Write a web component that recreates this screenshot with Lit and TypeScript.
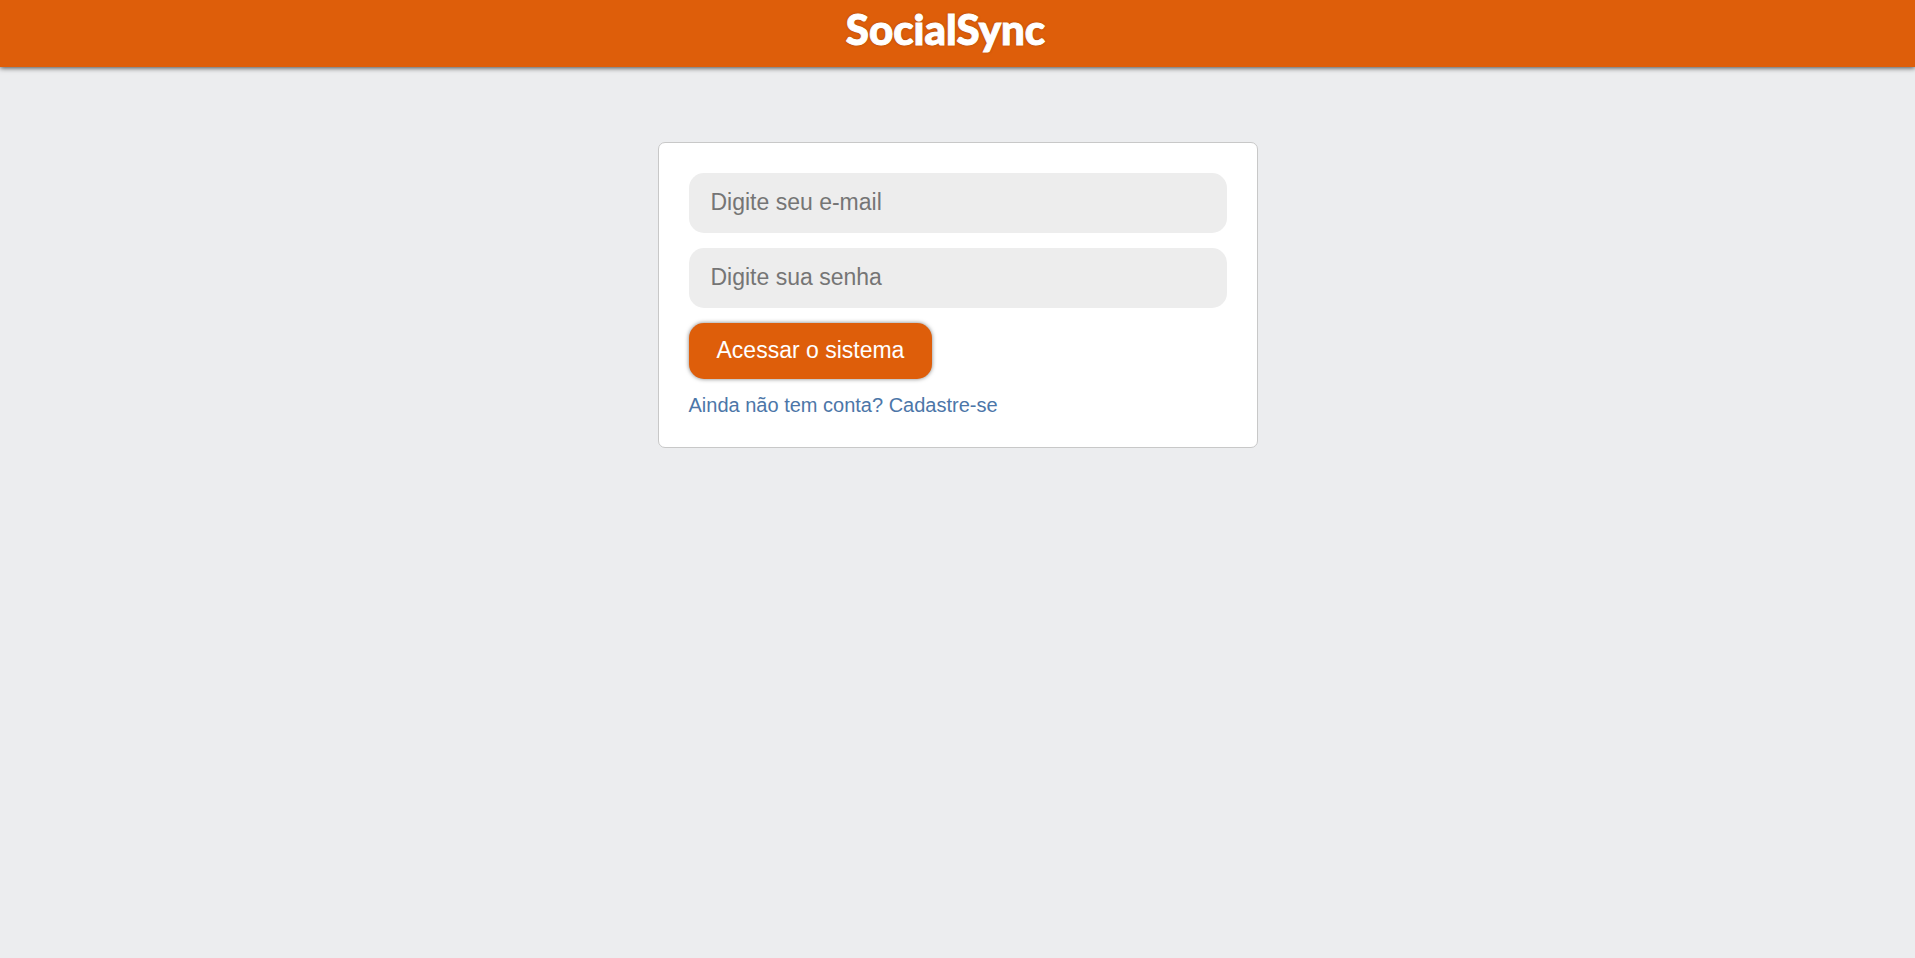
import { LitElement, html, css } from "lit";
import { customElement } from "lit/decorators.js";

@customElement("app-root")
export class AppRoot extends LitElement {
  static styles = css`
    :host {
      display: block;
      min-height: 100vh;
      background: #ecedef;
      font-family: Arial, "Liberation Sans", sans-serif;
    }
    * {
      box-sizing: border-box;
    }
    .header {
      display: flex;
      justify-content: center;
      height: 67px;
      padding-right: 24px;
      background: #de5e0a;
      box-shadow: 0 1px 5px rgba(0, 0, 0, 0.7);
    }
    .logo {
      color: #fff;
      font-family: Lato, "Open Sans", sans-serif;
      font-size: 42px;
      font-weight: 900;
      line-height: 58px;
      text-decoration: none;
      text-shadow: 0 0 3px rgba(0, 0, 0, 0.35);
      -webkit-text-stroke: 1px #fff;
    }
    .main {
      padding: 75px 20px;
    }
    .card {
      display: flex;
      flex-direction: column;
      align-items: flex-start;
      gap: 15px;
      max-width: 600px;
      margin: 0 auto;
      padding: 30px;
      background: #fff;
      border: 1px solid #c8c8c8;
      border-radius: 7px;
    }
    .field,
    .submit {
      border: 0;
      border-radius: 15px;
      font: 23px/26px Arial, "Liberation Sans", sans-serif;
    }
    .field {
      width: 100%;
      height: 60px;
      padding: 0 22px 2px;
      background: #ededed;
      color: #333;
    }
    .field::placeholder {
      color: #757575;
    }
    .submit {
      height: 56px;
      padding: 0 28px 2px;
      background: #de5e0a;
      box-shadow: 0 0 4px rgba(0, 0, 0, 0.5);
      color: #fff;
      cursor: pointer;
    }
    .signup {
      color: #4c76a8;
      font-size: 20px;
      line-height: 23px;
      text-decoration: none;
    }
  `;

  render() {
    return html`
      <header class="header"><a class="logo" href="#">SocialSync</a></header>
      <main class="main">
        <form class="card" @submit=${(e: Event) => e.preventDefault()}>
          <input class="field" type="email" name="email" aria-label="E-mail" placeholder="Digite seu e-mail" />
          <input class="field" type="password" name="senha" aria-label="Senha" placeholder="Digite sua senha" />
          <button class="submit" type="submit">Acessar o sistema</button>
          <a class="signup" href="#cadastro">Ainda não tem conta? Cadastre-se</a>
        </form>
      </main>
    `;
  }
}
